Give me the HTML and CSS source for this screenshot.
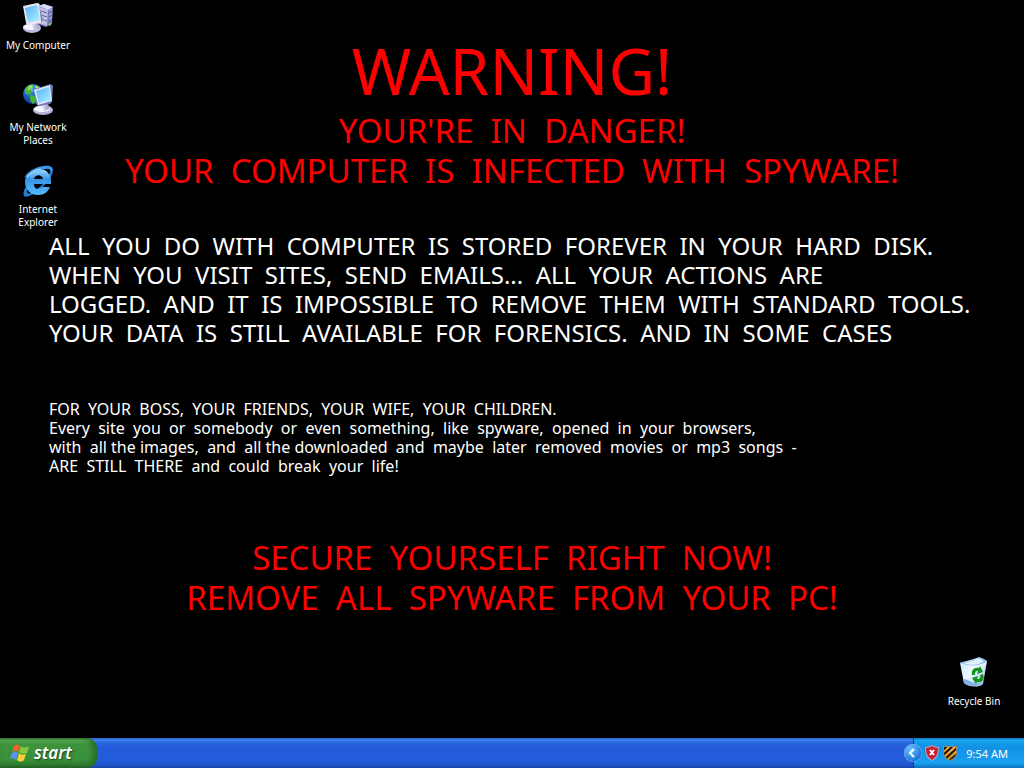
FILE: index.html
```
<!DOCTYPE html>
<html lang="en">
<head>
  <meta charset="UTF-8">
  <meta name="viewport" content="width=device-width,initial-scale=1">
  <title>Desktop</title>
  <link rel="stylesheet" href="styles.css">
</head>
<body>
  <main class="desktop">
    <div class="wallpaper">
      <h1>WARNING!</h1>
      <h2>YOUR'RE  IN  DANGER!
YOUR  COMPUTER  IS  INFECTED  WITH  SPYWARE!</h2>
      <p class="message">ALL  YOU  DO  WITH  COMPUTER  IS  STORED  FOREVER  IN  YOUR  HARD  DISK.
WHEN  YOU  VISIT  SITES,  SEND  EMAILS...  ALL  YOUR  ACTIONS  ARE
LOGGED.  AND  IT  IS  IMPOSSIBLE  TO  REMOVE  THEM  WITH  STANDARD  TOOLS.
YOUR  DATA  IS  STILL  AVAILABLE  FOR  FORENSICS.  AND  IN  SOME  CASES</p>
      <p class="details">FOR  YOUR  BOSS,  YOUR  FRIENDS,  YOUR  WIFE,  YOUR  CHILDREN.
Every  site  you  or  somebody  or  even  something,  like  spyware,  opened  in  your  browsers,
with  all the images,  and  all the downloaded  and  maybe  later  removed  movies  or  mp3  songs  -
ARE  STILL  THERE  and  could  break  your  life!</p>
      <h2>SECURE  YOURSELF  RIGHT  NOW!
REMOVE  ALL  SPYWARE  FROM  YOUR  PC!</h2>
    </div>

    <a class="icon computer" href="#">
      <svg width="34" height="34" viewBox="0 0 34 34">
        <defs>
          <linearGradient id="screen" x1="0" y1="0" x2="1" y2="1"><stop offset="0" stop-color="#59b2f8"/><stop offset="1" stop-color="#a9f3ff"/></linearGradient>
          <linearGradient id="plastic" x1="0" y1="0" x2="1" y2="0"><stop offset="0" stop-color="#f2f2fc"/><stop offset="1" stop-color="#9496cc"/></linearGradient>
        </defs>
        <path d="M17 6l6-2 9 3-1 17-6 3-9-3z" fill="#7477b5"/>
        <path d="M18 6l5-2 9 3-5 3z" fill="#d9daf4"/>
        <path d="M18 7l9 3-1 16-9-3z" fill="#bfc1e8"/>
        <path d="M20 11l6 2m-6 2l6 2m-6 2l6 2" stroke="#62669f" stroke-width="1"/>
        <path d="M28 11l3-2m-3 6l3-2m-3 6l3-2" stroke="#c1c4ea"/>
        <path d="M28 24l2-1v2l-2 1z" fill="#79e22a"/>
        <ellipse cx="11" cy="28" rx="9" ry="5" fill="#b9b9dd"/>
        <ellipse cx="10" cy="27" rx="8" ry="3" fill="#f5f5fd"/>
        <path d="M10 21l6 1 2 6-6 2z" fill="url(#plastic)"/>
        <path d="M2 6L16 3c2 0 3 1 3 3l3 14c0 2-1 2-2 3L8 25c-2 0-3-1-3-2z" fill="#e4e4f3"/>
        <path d="M18 4l4 16-2 3v-3z" fill="#7377a8"/>
        <path d="M4 8l12-3 3 15-12 2z" fill="url(#screen)"/>
      </svg>
      <span>My Computer</span>
    </a>

    <a class="icon network" href="#">
      <svg width="34" height="34" viewBox="0 0 34 34">
        <defs>
          <radialGradient id="globe" cx=".35" cy=".25"><stop offset="0" stop-color="#8cd2ff"/><stop offset=".5" stop-color="#267bdc"/><stop offset="1" stop-color="#1c49b4"/></radialGradient>
        </defs>
        <circle cx="12" cy="12" r="10" fill="url(#globe)"/>
        <path d="M4 7c2-3 5-5 9-4l-1 3-3 1 2 3-3 3-4-2zM9 13l6 1 1 5-4 3-3-4z" fill="#43b734"/>
        <path d="M8 4l3-1 1 2-4 3-2 1zM14 3l5 2-1 4-4-2z" fill="#98df67"/>
        <ellipse cx="22" cy="28" rx="10" ry="5" fill="#b5b4dc"/>
        <ellipse cx="21" cy="27" rx="8" ry="3" fill="#f7f7ff"/>
        <path d="M20 20l7-1 1 8-5 2z" fill="url(#plastic)"/>
        <path d="M13 7l17-5 2 2-1 16-2 2-12 2-2-2z" fill="#6e75aa"/>
        <path d="M13 8l16-5 2 16-14 4z" fill="#e2e6fa"/>
        <path d="M15 9l13-4 2 13-12 3z" fill="url(#screen)"/>
      </svg>
      <span>My Network<br>Places</span>
    </a>

    <a class="icon explorer" href="#">
      <svg width="34" height="34" viewBox="0 0 34 34">
        <defs>
          <linearGradient id="ie" x1="0" y1="0" x2="0" y2="1"><stop offset="0" stop-color="#a4ddff"/><stop offset=".4" stop-color="#3794e8"/><stop offset="1" stop-color="#54bcff"/></linearGradient>
        </defs>
        <path d="M6 21C1 28 1 35 8 32c11-4 24-18 24-26 0-5-5-4-11-1 5-1 8-1 8 2 0 7-11 18-19 22-4 2-5-2-3-7z" fill="#2a7acb"/>
        <path fill-rule="evenodd" d="M18 5C9 5 4 11 4 18s5 13 13 13c6 0 10-3 12-8h-8c-2 3-8 3-8-3h17C31 11 26 5 18 5zM13 15c1-5 8-5 9 0z" fill="url(#ie)"/>
        <path d="M3 14C7 7 14 3 23 2c5-1 9 0 8 6-1-4-5-4-10-2C13 7 8 10 3 14z" fill="#3c9bee"/>
        <path d="M6 13c3-4 8-7 14-8" stroke="#c9eeff" fill="none"/>
      </svg>
      <span>Internet<br>Explorer</span>
    </a>

    <a class="icon recycle" href="#">
      <svg width="34" height="34" viewBox="0 0 34 34">
        <defs>
          <linearGradient id="bin" x1="0" y1="0" x2="1" y2="1"><stop offset="0" stop-color="#c9e4fc"/><stop offset=".45" stop-color="#f0faff"/><stop offset="1" stop-color="#8fbbed"/></linearGradient>
        </defs>
        <path d="M3 7L20 2l10 3-4 23c-4 4-15 3-19-1z" fill="url(#bin)"/>
        <path d="M3 7c3-2 7-1 10-2l9-4c3 1 6 2 8 4-6 5-17 6-27 2z" fill="#93bff0"/>
        <path d="M6 7c6-1 11-2 15-5l6 3c-5 4-13 5-21 2z" fill="#e5f5ff"/>
        <path d="M6 23c7 0 8 6 20 4-4 4-15 4-19 0z" fill="#7fb0e8"/>
        <path d="M15 19c-1-5 2-8 7-7l1-2 3 6-6 2 1-3c-3 0-3 2-3 4zM26 18c2 6-1 9-6 8l-1 2-4-6 6-2-1 3c3 0 4-2 3-4z" fill="#15941d"/>
      </svg>
      <span>Recycle Bin</span>
    </a>
  </main>

  <footer class="taskbar">
    <button class="start">
      <svg width="20" height="20" viewBox="0 0 20 20">
        <path d="M4 3c2-2 4-2 6 0L8 9C6 7 4 7 2 9z" fill="#f16628"/>
        <path d="M11 3c2 2 5 2 8 0l-2 7c-3 1-5 1-8-1z" fill="#87c73c"/>
        <path d="M2 10c2-2 4-2 6 0l-2 7c-2-2-4-2-6-1z" fill="#5795f5"/>
        <path d="M9 10c2 2 5 2 7 1l-2 6c-2 2-5 2-7 0z" fill="#f7cf38"/>
      </svg>
      <span>start</span>
    </button>
    <div class="tray">
      <button class="expand" aria-label="Show hidden icons">
        <svg width="18" height="18" viewBox="0 0 18 18">
          <path d="M10 5L6 9l4 4" fill="none" stroke="#fff" stroke-width="2"/>
        </svg>
      </button>
      <svg class="tray-icon" width="16" height="16" viewBox="0 0 16 16">
        <path d="M8 0c2 1 4 2 7 2 0 6-1 11-7 14C2 13 1 8 1 2c3 0 5-1 7-2z" fill="#b3a9bc"/>
        <path d="M8 1c2 1 4 2 6 2 0 6-2 9-6 12-4-3-6-6-6-12 2 0 4-1 6-2z" fill="#c91f30"/>
        <path d="M6 5l4 5m0-5l-4 5" stroke="#fff" stroke-width="2"/>
      </svg>
      <svg class="tray-icon" width="16" height="16" viewBox="0 0 16 16">
        <defs>
          <clipPath id="shield"><path d="M2 2h12v6c0 3-2 5-6 7-4-2-6-4-6-7z"/></clipPath>
          <linearGradient id="gold" x1="0" y1="0" x2="0" y2="1"><stop offset="0" stop-color="#ffb84c"/><stop offset="1" stop-color="#cf8308"/></linearGradient>
        </defs>
        <path d="M1 1h14v7c0 3-2 6-7 8-5-2-7-5-7-8z" fill="#9a8468"/>
        <g clip-path="url(#shield)">
          <path d="M1 1h14v15H1z" fill="url(#gold)"/>
          <path d="M0 6L6 0M0 11L12 0M2 15L16 2M6 17L17 7" stroke="#17130c" stroke-width="2"/>
        </g>
      </svg>
      <time datetime="09:54">9:54 AM</time>
    </div>
  </footer>
</body>
</html>
```

FILE: styles.css
```
* { box-sizing:border-box; }
body { margin:0; min-height:100vh; display:flex; flex-direction:column; background:#000; color:#fff; font-family:Tahoma,"Noto Sans",sans-serif; }
.desktop { flex:1; position:relative; overflow:hidden; }

.wallpaper { padding:31px 49px 0; }
h1, h2 { margin:0; color:#f00; font-weight:400; text-align:center; white-space:pre; }
h1 { font-size:64px; line-height:80px; }
h2 { font-size:33px; line-height:40px; }
p { margin:0; white-space:pre; }
.message { margin-top:40px; font-size:24px; line-height:29px; }
.details { margin:53px 0 62px; font-size:16px; line-height:19px; }

/* shortcuts */
.icon { position:absolute; width:76px; display:flex; flex-direction:column; align-items:center; gap:5px; color:#fff; font-size:10px; line-height:13px; text-align:center; text-decoration:none; }
.computer { left:0; top:0; }
.network { left:0; top:82px; }
.explorer { left:0; top:164px; }
.recycle { right:12px; bottom:30px; }

/* taskbar */
.taskbar { height:30px; display:flex; justify-content:space-between; background:linear-gradient(#3165c8 0, #3a82f0 2px, #2a64de 5px, #245bdb 10px, #245bdb 24px, #1f50c2 28px, #1941a5); }
button { border:0; padding:0; color:#fff; font-family:inherit; }
.start { width:97px; padding:0 10px; display:flex; align-items:center; gap:4px; border-radius:0 10px 10px 0; background:linear-gradient(#2b692a 0, #62b25f 2px, #3e943c 6px, #3a903a 22px, #307d30 27px, #205b20); box-shadow:inset -4px 0 6px #246a24; font-size:17px; line-height:24px; font-style:italic; font-weight:600; text-shadow:1px 1px 2px #163f16; }
.tray { padding:0 16px 0 0; display:flex; align-items:center; gap:2px; border-left:1px solid #0a3a98; background:linear-gradient(#0e6dc0 0, #1ba8f1 2px, #139be8 5px, #1290e4 10px, #18a2f1 25px, #0e77c5 29px); font-size:11px; }
.expand { width:18px; height:18px; margin-left:-10px; border-radius:50%; background:radial-gradient(circle at 35% 30%, #67c4ff, #1873d9 70%); box-shadow:inset 0 0 1px #fff; }
.expand svg, .tray-icon { display:block; }
.tray time { margin-left:6px; }
```
